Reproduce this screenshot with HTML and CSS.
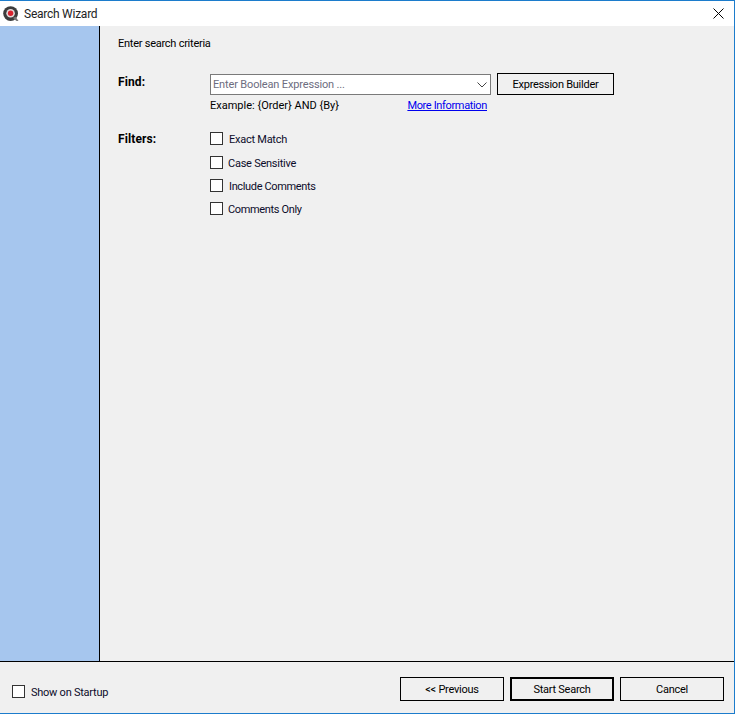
FILE: index.html
```html
<!DOCTYPE html>
<html lang="en">
<head>
<meta charset="utf-8">
<title>Search Wizard</title>
<link rel="stylesheet" href="styles.css">
</head>
<body>
<div class="window">
  <header class="titlebar">
    <svg class="app-icon" width="16" height="16" viewBox="0 0 16 16" aria-hidden="true">
      <circle cx="7.6" cy="7.6" r="7.4" fill="#3c3c3c"/>
      <circle cx="7.6" cy="7.2" r="4.3" fill="#e2d9d9"/>
      <circle cx="7.6" cy="7.2" r="2.7" fill="#d8232f"/>
      <path d="M10 12l2.5-1.5l3 4.5h-2z" fill="#777"/>
    </svg>
    <span class="title">Search Wizard</span>
    <svg class="close" width="11" height="11" viewBox="0 0 11 11" aria-hidden="true">
      <path d="M0.5 0.5l10 10M10.5 0.5l-10 10" stroke="#000" stroke-width="1" fill="none"/>
    </svg>
  </header>
  <div class="body">
    <aside class="sidebar"></aside>
    <main class="content">
      <p class="heading">Enter search criteria</p>
      <div class="form">
        <div class="label">Find:</div>
        <div class="find-col">
          <div class="find-row">
            <div class="combo">
              <span class="placeholder">Enter Boolean Expression ...</span>
              <svg width="10" height="6" viewBox="0 0 10 6" aria-hidden="true"><path d="M0.5 0.5l4.5 4.5l4.5-4.5" stroke="#444" fill="none"/></svg>
            </div>
            <button class="btn builder" type="button">Expression Builder</button>
          </div>
          <div class="hint-row">
            <span class="example">Example: {Order} AND {By}</span>
            <a class="link" href="#">More Information</a>
          </div>
        </div>
        <div class="label filters-label">Filters:</div>
        <div class="filters">
          <label class="check r1"><span class="box"></span><span class="text">Exact Match</span></label>
          <label class="check r2"><span class="box"></span><span class="text tight">Case Sensitive</span></label>
          <label class="check r3"><span class="box"></span><span class="text narrow">Include Comments</span></label>
          <label class="check r4"><span class="box"></span><span class="text tight narrow">Comments Only</span></label>
        </div>
      </div>
    </main>
  </div>
  <footer class="footer">
    <label class="check startup"><span class="box"></span><span class="text">Show on Startup</span></label>
    <div class="actions">
      <button class="btn action" type="button">&lt;&lt; Previous</button>
      <button class="btn action primary" type="button">Start Search</button>
      <button class="btn action" type="button">Cancel</button>
    </div>
  </footer>
</div>
</body>
</html>
```
FILE: styles.css
```css
* { box-sizing: border-box; }
html, body { margin: 0; padding: 0; }
body {
  width: 735px;
  height: 714px;
  overflow: hidden;
  font-family: "Roboto", "Liberation Sans", sans-serif;
  font-size: 11px;
  letter-spacing: -0.25px;
  color: #000;
}
.window {
  width: 735px;
  height: 714px;
  display: flex;
  flex-direction: column;
  border: 1px solid #1c7ccc;
  border-left: 0;
  background: #f0f0f0;
}
.titlebar {
  height: 25px;
  background: #fff;
  display: flex;
  align-items: center;
  padding: 0 10px 0 3px;
  flex: none;
}
.app-icon { flex: none; }
.title { margin-left: 5px; font-size: 12px; color: #222; }
.close { margin-left: auto; }
.body { flex: 1; display: flex; min-height: 0; }
.sidebar {
  width: 100px;
  flex: none;
  background: #a6c6ee;
  border-right: 1px solid #000;
}
.content { flex: 1; padding: 11px 0 0 18px; }
.heading { margin: 0; line-height: 14px; height: 14px; }
.form {
  margin-top: 22px;
  display: grid;
  grid-template-columns: 92px 1fr;
  row-gap: 19px;
}
.label { font-size: 12px; font-weight: 700; letter-spacing: 0.1px; line-height: 14px; padding-top: 2px; }
.find-row { display: flex; gap: 6px; align-items: flex-end; }
.combo {
  width: 281px;
  height: 21px;
  background: #fff;
  border: 1px solid #7a7a7a;
  display: flex;
  align-items: center;
  justify-content: space-between;
  padding: 0 3px 0 2px;
}
.placeholder { color: #6d6d80; letter-spacing: -0.15px; }
.btn {
  font: inherit;
  letter-spacing: inherit;
  color: #000;
  background: #f0f0f0;
  border: 1px solid #000;
  padding: 0;
  border-radius: 0;
}
.builder { width: 117px; height: 22px; padding-top: 1px; }
.hint-row {
  width: 277px;
  display: flex;
  justify-content: space-between;
  line-height: 14px;
  margin-top: 4px;
}
.example { letter-spacing: 0; }
.link { color: #0000ee; text-decoration: underline; letter-spacing: -0.35px; }
.filters-label { padding-top: 0; }
.filters { display: flex; flex-direction: column; }
.check { display: flex; align-items: center; gap: 6px; height: 13px; color: #0c0c2a; }
.text { padding-top: 1px; }
.r2 { margin-top: 11px; }
.r3, .r4 { margin-top: 10px; }
.tight { margin-left: -1px; }
.narrow { letter-spacing: -0.35px; }
.box { width: 13px; height: 13px; flex: none; border: 1px solid #333; background: #fff; }
.footer {
  height: 52px;
  flex: none;
  border-top: 1px solid #000;
  display: flex;
  align-items: flex-start;
  justify-content: space-between;
  padding: 15px 10px 0 12px;
}
.startup { margin-top: 8px; }
.actions { display: flex; gap: 6px; }
.action { width: 104px; height: 24px; }
.primary { border-width: 2px; }
```
